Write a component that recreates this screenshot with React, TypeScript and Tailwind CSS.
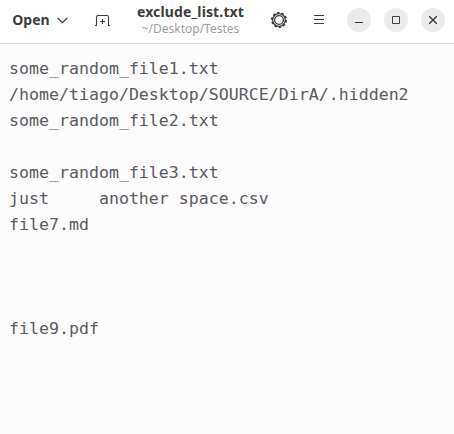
const lines = [
  "some_random_file1.txt",
  "/home/tiago/Desktop/SOURCE/DirA/.hidden2",
  "some_random_file2.txt",
  "",
  "some_random_file3.txt",
  "just     another space.csv",
  "file7.md",
  "",
  "",
  "",
  "file9.pdf",
];

function GearIcon() {
  return (
    <svg width="18" height="18" viewBox="0 0 18 18" fill="none" stroke="#3d3d3d">
      <circle cx="9" cy="9" r="7.1" strokeWidth="1.8" strokeDasharray="2.46 2" />
      <circle cx="9" cy="9" r="6.3" strokeWidth="1.3" />
      <circle cx="9" cy="9" r="4.4" strokeWidth="1.2" />
    </svg>
  );
}

function Header() {
  return (
    <header className="flex h-[43px] shrink-0 bg-white text-[#3d3d3d]">
      <div className="flex h-10 w-[117px] items-center pl-3">
        <button className="flex w-[56px] items-center justify-between">
          <span className="w-[38px] text-[14px] leading-5 font-bold">Open</span>
          <svg width="11" height="7" viewBox="0 0 11 7" fill="none" stroke="#3d3d3d" strokeWidth="1.2">
            <path d="M0.7 1 5.5 5.7 10.3 1" />
          </svg>
        </button>
        <svg className="mt-[2px] ml-[27px]" width="15" height="12" viewBox="0 0 15 12" fill="none" stroke="#3d3d3d">
          <path d="M0 10.5H1.5V2.5Q1.5 .5 3 .5H12Q13.5 .5 13.5 2.5V10.5H15M5 6.5h5M7.5 4v5" strokeWidth="1.1" />
        </svg>
      </div>
      <div className="flex w-[147px] flex-col items-center">
        <h1 className="mt-[3px] text-[14px] leading-[18px] font-bold tracking-[0.13px] whitespace-nowrap">
          exclude_list.txt
        </h1>
        <p className="text-[12px] leading-4 text-[#a0a0a0]">~/Desktop/Testes</p>
      </div>
      <div className="flex h-10 items-center pl-[6px]">
        <GearIcon />
        <svg className="-mt-px ml-[26px]" width="10" height="9" viewBox="0 0 10 9" stroke="#3d3d3d">
          <path d="M0 .5h10M0 4.5h10M0 8.5h10" />
        </svg>
        <div className="ml-[23px] flex gap-[13px]">
          <button className="flex size-6 items-center justify-center rounded-full bg-[#ebebeb]">
            <svg width="8" height="10" viewBox="0 0 8 10" stroke="#3d3d3d"><path d="M0 7.5h8" /></svg>
          </button>
          <button className="flex size-6 items-center justify-center rounded-full bg-[#ebebeb]">
            <svg width="8" height="8" viewBox="0 0 8 8" fill="none" stroke="#3d3d3d"><path d="M.5.5h7v7h-7z" /></svg>
          </button>
          <button className="flex size-6 items-center justify-center rounded-full bg-[#ebebeb]">
            <svg width="8" height="8" viewBox="0 0 8 8" stroke="#3d3d3d" strokeWidth="1.4"><path d="m0 0 8 8M8 0 0 8" /></svg>
          </button>
        </div>
      </div>
    </header>
  );
}

export default function App() {
  return (
    <div className="flex h-[434px] w-[454px] flex-col overflow-hidden bg-[#fcfcfc] font-['Noto_Sans',sans-serif]">
      <Header />
      <main className="grow border-t border-[#dcdcdc] pt-3 pl-[9px] font-['DejaVu_Sans_Mono',monospace] text-[16.6px] text-[#5a5a60]">
        {lines.map((line, i) => (
          <div key={i} className="h-[26px] leading-[26px] whitespace-pre">
            {line}
          </div>
        ))}
      </main>
    </div>
  );
}
